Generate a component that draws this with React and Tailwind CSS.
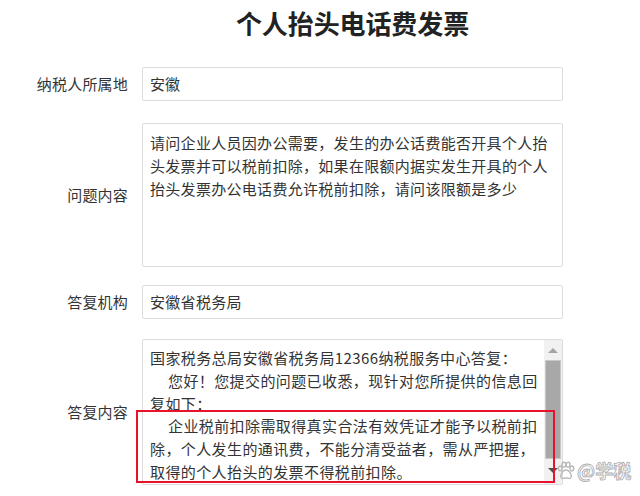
const FONT = { fontFamily: '"Noto Sans CJK SC", "Liberation Sans", sans-serif' }

const QUESTION = [
  '请问企业人员因办公需要，发生的办公话费能否开具个人抬',
  '头发票并可以税前扣除，如果在限额内据实发生开具的个人',
  '抬头发票办公电话费允许税前扣除，请问该限额是多少',
]

const ANSWER = [
  { text: '国家税务总局安徽省税务局12366纳税服务中心答复：' },
  { text: '您好！您提交的问题已收悉，现针对您所提供的信息回', indent: true },
  { text: '复如下：' },
  { text: '企业税前扣除需取得真实合法有效凭证才能予以税前扣', indent: true },
  { text: '除，个人发生的通讯费，不能分清受益者，需从严把握，' },
  { text: '取得的个人抬头的发票不得税前扣除。' },
]

function Row({ label, children, className = '' }) {
  return (
    <div className={`flex items-center ${className}`}>
      <div className="w-[128px] text-right text-[15px] tracking-[0.2px] text-[#333]">{label}</div>
      <div className="ml-[14px] w-[421px]">{children}</div>
    </div>
  )
}

function Scrollbar() {
  return (
    <div className="w-[18px] bg-[#f1f1f1] flex flex-col items-center">
      <div className="h-[20px] flex items-center justify-center">
        <div className="w-0 h-0 border-l-[5px] border-r-[5px] border-b-[5px] border-l-transparent border-r-transparent border-b-[#a3a3a3]" />
      </div>
      <div className="w-[16px] h-[99px] bg-[#a8a8a8] border border-[#c8c8c8]" />
      <div className="flex-1" />
      <div className="h-[22px] flex items-start justify-center pt-[6px]">
        <div className="w-0 h-0 border-l-[5px] border-r-[5px] border-t-[5px] border-l-transparent border-r-transparent border-t-[#505050]" />
      </div>
    </div>
  )
}

export default function App() {
  return (
    <div className="relative w-[640px] h-[496px] bg-white overflow-hidden" style={FONT}>
      <h1 className="ml-[142px] w-[421px] pt-[7px] text-center text-[26px] leading-[31px] font-bold text-[#222] tracking-[-0.1px]">
        个人抬头电话费发票
      </h1>

      <Row label="纳税人所属地" className="mt-[29px]">
        <div className="h-[34px] border border-[#dcdcdc] rounded-[2px] px-[7px] flex items-center text-[15px] text-[#333]">
          安徽
        </div>
      </Row>

      <Row label="问题内容" className="mt-[22px]">
        <div className="h-[144px] border border-[#dcdcdc] rounded-[2px] px-[7px] pt-[7px] text-[15px] tracking-[0.3px] leading-[23px] text-[#333] whitespace-nowrap">
          {QUESTION.map(line => <div key={line}>{line}</div>)}
        </div>
      </Row>

      <Row label="答复机构" className="mt-[18px]">
        <div className="h-[34px] border border-[#dcdcdc] rounded-[2px] px-[7px] flex items-center text-[15px] tracking-[0.3px] text-[#333]">
          安徽省税务局
        </div>
      </Row>

      <Row label="答复内容" className="mt-[20px]">
        <div className="h-[146px] border border-[#dcdcdc] rounded-[2px] flex overflow-hidden">
          <div className="flex-1 pl-[7px] pt-[7px] text-[15px] tracking-[0.4px] leading-[22.8px] text-[#333] whitespace-nowrap overflow-hidden">
            {ANSWER.map(l => (
              <div key={l.text} className={l.indent ? 'pl-[18px]' : ''}>{l.text}</div>
            ))}
          </div>
          <Scrollbar />
        </div>
      </Row>

      {/* highlight frame */}
      <div className="absolute left-[136px] top-[410px] w-[419px] h-[73px] border-2 border-[#e8132b]" />

      {/* watermark */}
      <div className="absolute left-[556px] top-[459px] flex items-center gap-[2px]">
        <svg width="19" height="19" viewBox="0 0 18 18" fill="none" stroke="#b8b8b8" strokeWidth="1.3">
          <ellipse cx="4" cy="7" rx="1.8" ry="2.3" />
          <ellipse cx="7.5" cy="3.5" rx="1.8" ry="2.3" />
          <ellipse cx="11.5" cy="3.5" rx="1.8" ry="2.3" />
          <ellipse cx="15" cy="7" rx="1.8" ry="2.3" />
          <path d="M9.5 8.5c-2.5 0-5 3.5-5 6 0 1.6 1.5 2.2 2.6 2 1-.2 1.6-.6 2.4-.6s1.4.4 2.4.6c1.1.2 2.6-.4 2.6-2 0-2.5-2.5-6-5-6z" />
        </svg>
        <span className="text-[18px] leading-[22px] font-bold" style={{ color: '#fff', WebkitTextStroke: '0.9px #b0b0b0' }}>
          @学税
        </span>
      </div>
    </div>
  )
}
